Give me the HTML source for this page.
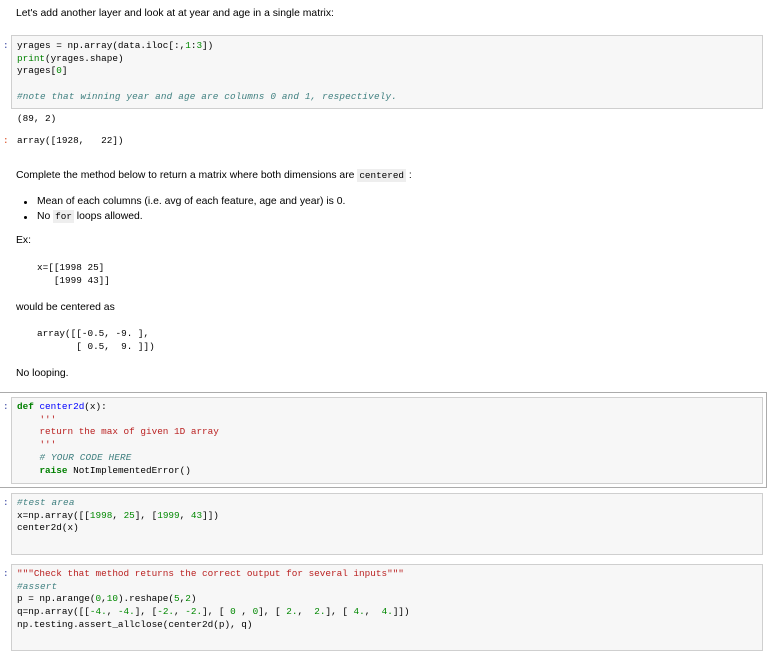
<!DOCTYPE html>
<html><head><meta charset="utf-8">
<style>
body{margin:0;width:767px;height:657px;background:#fff;position:relative;overflow:hidden;font-family:"Liberation Sans",Arial,sans-serif;color:#000}
.t{position:absolute;font-size:10.4px;white-space:pre;line-height:12px}
.c{position:absolute;font-family:"Liberation Mono",monospace;font-size:9.35px;white-space:pre;line-height:12.7px;color:#000}
.box{position:absolute;left:11px;width:750px;background:#f7f7f7;border:1px solid #cfcfcf}
.p{position:absolute;left:3px;font-family:"Liberation Mono",monospace;font-size:9.3px;color:#303f9f}
.po{color:#d84315}
.k{color:#008000;font-weight:bold}
.n{color:#008800}
.s{color:#ba2121}
.cm{color:#408080;font-style:italic;letter-spacing:0.15px}
.f{color:#0000ff}
.b{color:#008000}
.ic{font-family:"Liberation Mono",monospace;background:#eee;padding:1px 2px;font-size:9.3px}
.dot{position:absolute;width:3px;height:3px;background:#000;border-radius:50%}
</style></head><body>
<div class="t" style="left:16px;top:8px">Let's add another layer and look at at year and age in a single matrix:</div>

<div class="box" style="top:35px;height:72px"></div>
<div class="p" style="top:40px">:</div>
<div class="c" style="left:17px;top:40px">yrages = np.array(data.iloc[:,<span class="n">1</span>:<span class="n">3</span>])
<span class="b">print</span>(yrages.shape)
yrages[<span class="n">0</span>]

<span class="cm">#note that winning year and age are columns 0 and 1, respectively.</span></div>
<div class="c" style="left:17px;top:113px">(89, 2)</div>
<div class="p po" style="top:135px">:</div>
<div class="c" style="left:17px;top:135px">array([1928,   22])</div>

<div class="t" style="left:16px;top:170px">Complete the method below to return a matrix where both dimensions are <span class="ic">centered</span> :</div>
<div class="dot" style="left:24px;top:201px"></div>
<div class="t" style="left:37px;top:196px">Mean of each columns (i.e. avg of each feature, age and year) is 0.</div>
<div class="dot" style="left:24px;top:216px"></div>
<div class="t" style="left:37px;top:211px">No <span class="ic">for</span> loops allowed.</div>
<div class="t" style="left:16px;top:235px">Ex:</div>
<div class="c" style="left:37px;top:262px">x=[[1998 25]
   [1999 43]]</div>
<div class="t" style="left:16px;top:302px">would be centered as</div>
<div class="c" style="left:37px;top:328px">array([[-0.5, -9. ],
       [ 0.5,  9. ]])</div>
<div class="t" style="left:16px;top:368px">No looping.</div>

<div style="position:absolute;left:-2px;top:392px;width:767px;height:94px;border:1px solid #ababab"></div>
<div class="box" style="top:397px;height:85px"></div>
<div class="p" style="top:401px">:</div>
<div class="c" style="left:17px;top:401px"><span class="k">def</span> <span class="f">center2d</span>(x):
    <span class="s">'''</span>
    <span class="s">return the max of given 1D array</span>
    <span class="s">'''</span>
    <span class="cm"># YOUR CODE HERE</span>
    <span class="k">raise</span> NotImplementedError()</div>

<div class="box" style="top:493px;height:60px"></div>
<div class="p" style="top:497px">:</div>
<div class="c" style="left:17px;top:497px"><span class="cm">#test area</span>
x=np.array([[<span class="n">1998</span>, <span class="n">25</span>], [<span class="n">1999</span>, <span class="n">43</span>]])
center2d(x)</div>

<div class="box" style="top:564px;height:85px"></div>
<div class="p" style="top:568px">:</div>
<div class="c" style="left:17px;top:568px"><span class="s">"""Check that method returns the correct output for several inputs"""</span>
<span class="cm">#assert</span>
p = np.arange(<span class="n">0</span>,<span class="n">10</span>).reshape(<span class="n">5</span>,<span class="n">2</span>)
q=np.array([[<span class="n">-4.</span>, <span class="n">-4.</span>], [<span class="n">-2.</span>, <span class="n">-2.</span>], [ <span class="n">0</span> , <span class="n">0</span>], [ <span class="n">2.</span>,  <span class="n">2.</span>], [ <span class="n">4.</span>,  <span class="n">4.</span>]])
np.testing.assert_allclose(center2d(p), q)</div>
</body></html>
